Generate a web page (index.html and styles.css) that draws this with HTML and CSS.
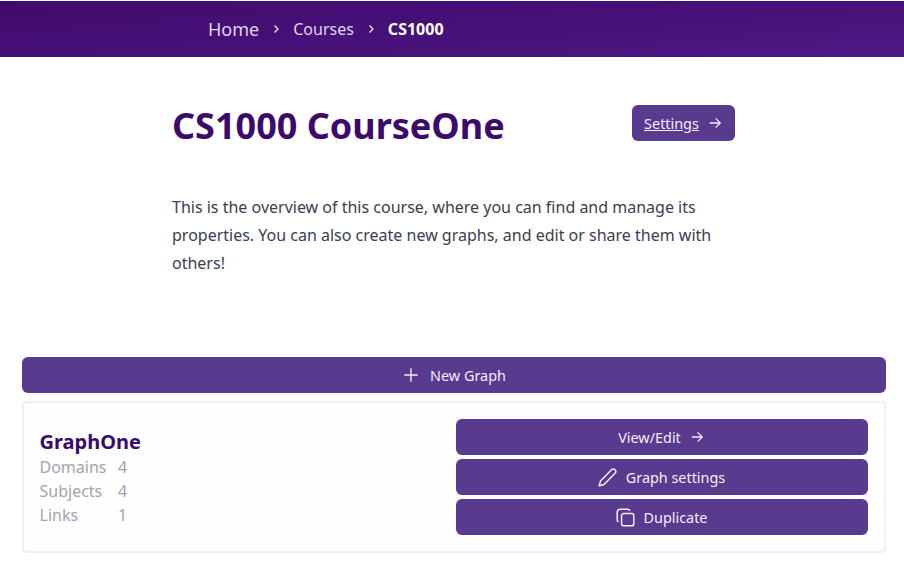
FILE: index.html
```html
<!DOCTYPE html>
<html lang="en">
<head>
<meta charset="utf-8">
<title>CS1000 CourseOne</title>
<link rel="stylesheet" href="styles.css">
</head>
<body>
<nav class="crumbs">
  <a class="crumb crumb-home">Home</a>
  <svg class="chev" viewBox="0 0 10 10"><path d="M3.500 1.500 7 5 3.500 8.500"/></svg>
  <a class="crumb">Courses</a>
  <svg class="chev" viewBox="0 0 10 10"><path d="M3.500 1.500 7 5 3.500 8.500"/></svg>
  <a class="crumb crumb-current">CS1000</a>
</nav>
<main class="page">
  <section class="intro">
    <div class="title-row">
      <h1 class="title">CS1000 CourseOne</h1>
      <a class="btn btn-settings"><span class="label underlined">Settings</span>
        <svg class="icon-arrow" viewBox="0 0 24 24"><path d="M3 12h18M13 4l8 8-8 8"/></svg></a>
    </div>
    <p class="lead">This is the overview of this course, where you can find and manage its properties. You can also create new graphs, and edit or share them with others!</p>
  </section>
  <section class="graphs">
    <a class="btn btn-wide btn-new">
      <svg class="icon-plus" viewBox="0 0 24 24"><path d="M12 3v18M3 12h18"/></svg>
      <span class="label">New Graph</span></a>
    <article class="card">
      <div class="card-info">
        <h2 class="card-title">GraphOne</h2>
        <dl class="stats">
          <dt>Domains</dt><dd>4</dd>
          <dt>Subjects</dt><dd>4</dd>
          <dt>Links</dt><dd>1</dd>
        </dl>
      </div>
      <div class="card-actions">
        <a class="btn btn-wide"><span class="label">View/Edit</span>
          <svg class="icon-arrow" viewBox="0 0 24 24"><path d="M3 12h18M13 4l8 8-8 8"/></svg></a>
        <a class="btn btn-wide">
          <svg class="icon-lg" viewBox="0 0 24 24"><path d="M16.600 3.200a2.800 2.800 0 0 1 4 4L8 20 2.500 21.500 4 16z"/></svg>
          <span class="label">Graph settings</span></a>
        <a class="btn btn-wide">
          <svg class="icon-lg" viewBox="0 0 24 24"><rect x="7.500" y="7.500" width="14" height="14" rx="2.500"/><path d="M17 4.500A2.500 2.500 0 0 0 14.500 2.500h-9A3.500 3.500 0 0 0 2.500 6v9A2.500 2.500 0 0 0 4 17"/></svg>
          <span class="label">Duplicate</span></a>
      </div>
    </article>
  </section>
</main>
</body>
</html>
```
FILE: styles.css
```css
* { box-sizing: border-box; }
html, body { margin: 0; padding: 0; }
body {
  width: 904px;
  height: 562px;
  overflow: hidden;
  background: #fff;
  font-family: "Noto Sans", sans-serif;
  color: #374151;
}
.crumbs {
  margin-top: 1px;
  height: 56px;
  padding-left: 208px;
  display: flex;
  align-items: center;
  background: linear-gradient(175deg, #410b6d 0%, #47127a 60%, #4e1a83 100%);
}
.crumb { font-size: 16px; line-height: 24px; color: #e0d4ee; }
.crumb-home { font-size: 18px; }
.crumb-current { color: #fff; font-weight: 700; }
.chev {
  width: 10px;
  height: 10px;
  margin: 0 12px;
  fill: none;
  stroke: #f0e8f8;
  stroke-width: 1.3;
}
.page { display: block; }
.intro { margin-left: 172px; width: 563px; }
.title-row {
  display: flex;
  align-items: flex-start;
  justify-content: space-between;
  padding-top: 44px;
}
.title {
  margin: 0;
  font-size: 36px;
  line-height: 50px;
  font-weight: 700;
  color: #3c0a6b;
}
.btn {
  display: flex;
  align-items: center;
  justify-content: center;
  height: 36px;
  border-radius: 6px;
  background: #583a8e;
  color: #f3eefa;
  font-size: 14.4px;
  line-height: 20px;
}
.label { padding-top: 2px; }
.btn-settings { width: 103px; gap: 9px; margin-top: 4px; padding-right: 1px; }
.underlined { text-decoration: underline; }
.icon-arrow {
  width: 14px;
  height: 14px;
  fill: none;
  stroke: currentColor;
  stroke-width: 2.2;
}
.lead {
  margin: 42px 0 0;
  width: 560px;
  font-size: 16px;
  line-height: 28px;
}
.graphs { margin: 80px 18px 0 22px; display: flex; flex-direction: column; gap: 8px; }
.btn-wide { width: 100%; }
.btn-new { gap: 10px; }
.icon-plus {
  width: 18px;
  height: 18px;
  fill: none;
  stroke: currentColor;
  stroke-width: 1.800;
}
.card {
  height: 152px;
  border: 2px solid #f0edfc;
  border-radius: 4px;
  padding: 16px 16px 16px 15.500px;
  display: flex;
  align-items: flex-start;
  justify-content: space-between;
  background: #fefefe;
}
.card-info { padding-top: 9px; width: 200px; }
.card-title {
  margin: 0 0 -1px;
  font-size: 20px;
  line-height: 28px;
  font-weight: 700;
  color: #3c0a6b;
}
.stats {
  margin: 0;
  display: grid;
  grid-template-columns: 78.500px auto;
  font-size: 16px;
  line-height: 24px;
  color: #a0a5b0;
}
.stats dt, .stats dd { margin: 0; }
.card-actions {
  width: 412px;
  display: flex;
  flex-direction: column;
  gap: 4px;
}
.card-actions .btn { gap: 8px; padding-right: 2px; }
.card-actions .btn:first-child { gap: 9px; }
.icon-lg {
  width: 21px;
  height: 21px;
  fill: none;
  stroke: currentColor;
  stroke-width: 1.700;
  stroke-linejoin: round;
}
```
